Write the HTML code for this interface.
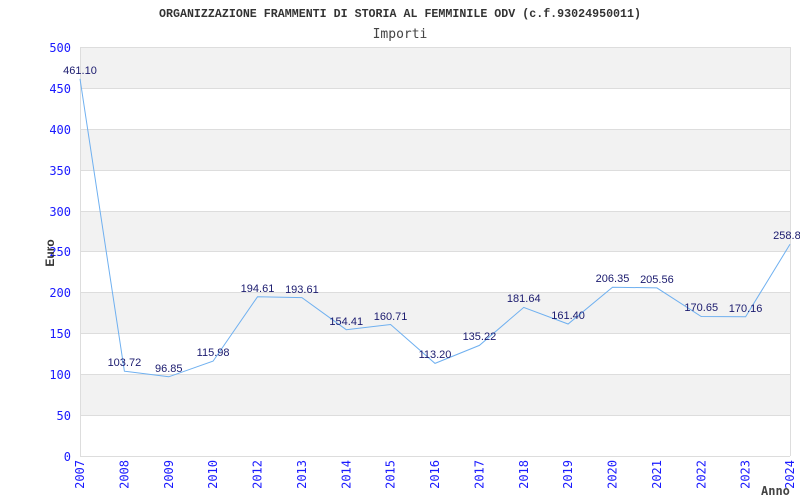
<!DOCTYPE html>
<html><head><meta charset="utf-8"><style>body{margin:0;background:#fff}svg{display:block}</style></head><body>
<svg width="800" height="500" xmlns="http://www.w3.org/2000/svg">
<rect width="800" height="500" fill="#fff"/>
<text x="159" y="17" textLength="482" lengthAdjust="spacingAndGlyphs" font-family="Liberation Mono, monospace" font-size="11.5" font-weight="bold" fill="#333">ORGANIZZAZIONE FRAMMENTI DI STORIA AL FEMMINILE ODV (c.f.93024950011)</text>
<text x="400" y="38" text-anchor="middle" font-family="DejaVu Sans Mono, monospace" font-size="13" fill="#444">Importi</text>
<g fill="#f2f2f2">
<rect x="80" y="47" width="710" height="41"/>
<rect x="80" y="129" width="710" height="41"/>
<rect x="80" y="211" width="710" height="41"/>
<rect x="80" y="292" width="710" height="41"/>
<rect x="80" y="374" width="710" height="41"/>
</g>
<g stroke="#ddd" stroke-width="1">
<line x1="80" y1="47.5" x2="790" y2="47.5"/><line x1="80" y1="88.5" x2="790" y2="88.5"/><line x1="80" y1="129.5" x2="790" y2="129.5"/><line x1="80" y1="170.5" x2="790" y2="170.5"/><line x1="80" y1="211.5" x2="790" y2="211.5"/><line x1="80" y1="251.5" x2="790" y2="251.5"/><line x1="80" y1="292.5" x2="790" y2="292.5"/><line x1="80" y1="333.5" x2="790" y2="333.5"/><line x1="80" y1="374.5" x2="790" y2="374.5"/><line x1="80" y1="415.5" x2="790" y2="415.5"/><line x1="80" y1="456.5" x2="790" y2="456.5"/>
<line x1="80.5" y1="47" x2="80.5" y2="456"/><line x1="790.5" y1="47" x2="790.5" y2="456"/>
</g>
<g font-family="DejaVu Sans Mono, monospace" font-size="12" fill="#1a1aff" text-anchor="end">
<text x="71" y="52">500</text><text x="71" y="93">450</text><text x="71" y="134">400</text><text x="71" y="175">350</text><text x="71" y="216">300</text><text x="71" y="256">250</text><text x="71" y="297">200</text><text x="71" y="338">150</text><text x="71" y="379">100</text><text x="71" y="420">50</text><text x="71" y="461">0</text>
</g>
<text transform="translate(54,253) rotate(-90)" text-anchor="middle" font-family="Liberation Sans, sans-serif" font-size="12" font-weight="bold" fill="#333">Euro</text>
<text x="761" y="495" font-family="DejaVu Sans Mono, monospace" font-size="12" font-weight="bold" fill="#444">Anno</text>
<g font-family="DejaVu Sans Mono, monospace" font-size="12" fill="#1a1aff" text-anchor="end">
<text transform="translate(84,460) rotate(-90)">2007</text>
<text transform="translate(128.4,460) rotate(-90)">2008</text>
<text transform="translate(172.75,460) rotate(-90)">2009</text>
<text transform="translate(217.1,460) rotate(-90)">2010</text>
<text transform="translate(261.5,460) rotate(-90)">2012</text>
<text transform="translate(305.9,460) rotate(-90)">2013</text>
<text transform="translate(350.25,460) rotate(-90)">2014</text>
<text transform="translate(394.6,460) rotate(-90)">2015</text>
<text transform="translate(439,460) rotate(-90)">2016</text>
<text transform="translate(483.4,460) rotate(-90)">2017</text>
<text transform="translate(527.75,460) rotate(-90)">2018</text>
<text transform="translate(572.1,460) rotate(-90)">2019</text>
<text transform="translate(616.5,460) rotate(-90)">2020</text>
<text transform="translate(660.9,460) rotate(-90)">2021</text>
<text transform="translate(705.25,460) rotate(-90)">2022</text>
<text transform="translate(749.6,460) rotate(-90)">2023</text>
<text transform="translate(794,460) rotate(-90)">2024</text>
</g>
<polyline fill="none" stroke="#6fb0f0" stroke-width="1" points="80,78.8 124.4,371.2 168.75,376.8 213.1,361.1 257.5,296.8 301.9,297.6 346.25,329.7 390.6,324.5 435,363.4 479.4,345.4 523.75,307.4 568.1,324 612.5,287.2 656.9,287.9 701.25,316.5 745.6,316.8 790,244.3"/>
<g font-family="Liberation Sans, sans-serif" font-size="11" fill="#1a1a6e" text-anchor="middle">
<text x="80" y="74">461.10</text>
<text x="124.4" y="366">103.72</text>
<text x="168.75" y="372">96.85</text>
<text x="213.1" y="356">115.98</text>
<text x="257.5" y="292">194.61</text>
<text x="301.9" y="293">193.61</text>
<text x="346.25" y="325">154.41</text>
<text x="390.6" y="320">160.71</text>
<text x="435" y="358">113.20</text>
<text x="479.4" y="340">135.22</text>
<text x="523.75" y="302">181.64</text>
<text x="568.1" y="319">161.40</text>
<text x="612.5" y="282">206.35</text>
<text x="656.9" y="283">205.56</text>
<text x="701.25" y="311">170.65</text>
<text x="745.6" y="312">170.16</text>
<text x="790" y="239">258.86</text>
</g>
</svg>
</body></html>
